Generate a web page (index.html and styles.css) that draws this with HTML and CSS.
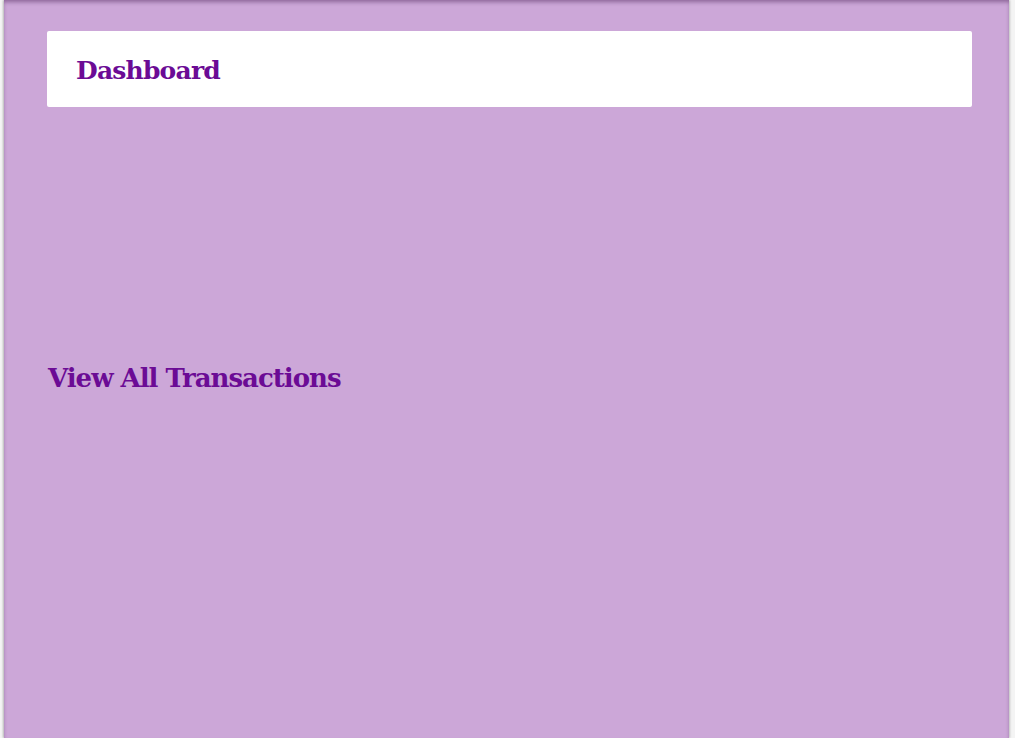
FILE: index.html
```html
<!DOCTYPE html>
<html>
<head>
<meta charset="utf-8">
<link rel="stylesheet" href="styles.css">
</head>
<body>
<div class="page">
  <header class="card">
    <h1 class="title">Dashboard</h1>
  </header>
  <section class="content">
    <h2 class="link-title">View All Transactions</h2>
  </section>
</div>
</body>
</html>
```
FILE: styles.css
```css
html, body {
  margin: 0;
  padding: 0;
  height: 100%;
  background: #f4f4f4;
}
body {
  font-family: "DejaVu Serif", "Liberation Serif", serif;
  padding-left: 4px;
  padding-right: 6px;
  box-sizing: border-box;
  overflow: hidden;
}
.page {
  background: #cca7d8;
  min-height: 100%;
  box-sizing: border-box;
  padding: 31px 37px 0 43px;
  box-shadow: -1px 0 2px rgba(0,0,0,0.25), 1px 0 2px rgba(0,0,0,0.2), inset 0 3px 4px -1px rgba(60,20,70,0.45);
}
.card {
  background: #fff;
  border-radius: 2px;
  height: 76px;
  box-sizing: border-box;
  padding: 25px 0 0 29px;
}
.title {
  margin: 0;
  color: #6b0b95;
  font-size: 25px;
  line-height: 30px;
  font-weight: bold;
  letter-spacing: -0.8px;
}
.content {
  padding-top: 256px;
  padding-left: 1px;
}
.link-title {
  margin: 0;
  color: #6b0b95;
  font-size: 26px;
  line-height: 30px;
  font-weight: bold;
  letter-spacing: -1px;
}
```
